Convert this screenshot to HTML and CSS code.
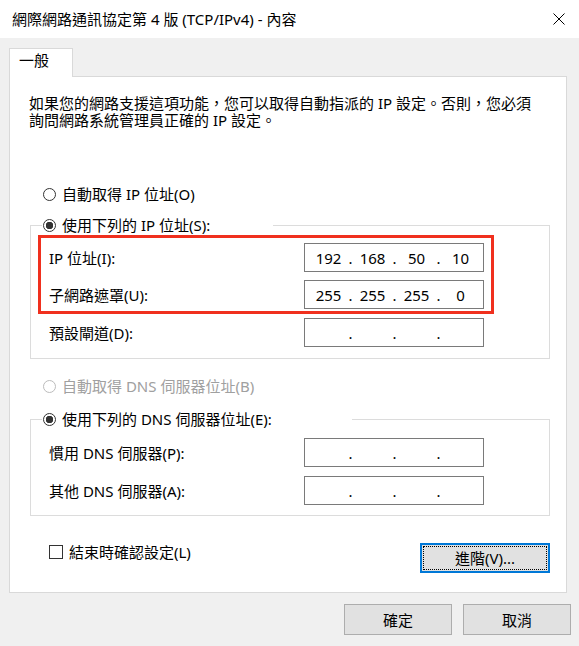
FILE: index.html
```html
<!DOCTYPE html>
<html lang="zh-Hant">

<head>
  <meta charset="UTF-8" />
  <title>網際網路通訊協定第 4 版 (TCP/IPv4) - 內容</title>
  <link rel="stylesheet" href="styles.css">
</head>

<body>

  <div class="titlebar">
    <span class="title">網際網路通訊協定第 4 版 (TCP/IPv4) - 內容</span>
    <svg class="close" width="12" height="12" viewBox="0 0 12 12">
      <path d="M0.5 0.5 L11.5 11.5 M11.5 0.5 L0.5 11.5" stroke="#000" stroke-width="1" fill="none" />
    </svg>
  </div>

  <div class="tabs">
    <div class="tab">一般</div>
  </div>

  <div class="panel">
    <p class="intro">如果您的網路支援這項功能，您可以取得自動指派的 IP 設定。否則，您必須<br>詢問網路系統管理員正確的 IP 設定。</p>

    <label class="option option-first"><input type="radio" name="ip" /> 自動取得 IP 位址(O)</label>

    <!-- 手動 IP -->
    <fieldset class="group group-ip">
      <legend class="legend legend-ip">
        <label class="option"><input type="radio" name="ip" checked /> 使用下列的 IP 位址(S):</label>
      </legend>
      <div class="highlight">
        <div class="row">
          <span>IP 位址(I):</span>
          <div class="ipbox"><span>192</span><span>.</span><span>168</span><span>.</span><span>50</span><span>.</span><span>10</span></div>
        </div>
        <div class="row">
          <span>子網路遮罩(U):</span>
          <div class="ipbox"><span>255</span><span>.</span><span>255</span><span>.</span><span>255</span><span>.</span><span>0</span></div>
        </div>
      </div>
      <div class="row row-plain row-gateway">
        <span>預設閘道(D):</span>
        <div class="ipbox"><span></span><span>.</span><span></span><span>.</span><span></span><span>.</span><span></span></div>
      </div>
    </fieldset>

    <label class="option option-dns disabled"><input type="radio" name="dns" disabled /> 自動取得 DNS 伺服器位址(B)</label>

    <!-- 手動 DNS -->
    <fieldset class="group group-dns">
      <legend class="legend legend-dns">
        <label class="option"><input type="radio" name="dns" checked /> 使用下列的 DNS 伺服器位址(E):</label>
      </legend>
      <div class="row row-plain">
        <span>慣用 DNS 伺服器(P):</span>
        <div class="ipbox"><span></span><span>.</span><span></span><span>.</span><span></span><span>.</span><span></span></div>
      </div>
      <div class="row row-plain row-second">
        <span>其他 DNS 伺服器(A):</span>
        <div class="ipbox"><span></span><span>.</span><span></span><span>.</span><span></span><span>.</span><span></span></div>
      </div>
    </fieldset>

    <div class="panel-bottom">
      <label class="option check"><input type="checkbox" /> 結束時確認設定(L)</label>
      <button class="btn btn-focus">進階(V)...</button>
    </div>
  </div>

  <div class="footer">
    <button class="btn btn-dialog">確定</button>
    <button class="btn btn-dialog">取消</button>
  </div>

</body>

</html>
```

FILE: styles.css
```css
* {
  margin: 0;
  padding: 0;
  box-sizing: border-box;
}

body {
  width: 579px;
  height: 646px;
  overflow: hidden;
  background-color: #f0f0f0;
  color: #000;
  font-family: "Noto Sans", "Noto Sans CJK TC", sans-serif;
  font-size: 15px;
  line-height: 18px;
}

/* barra de título */
.titlebar {
  height: 38px;
  background: #fff;
  display: flex;
  align-items: center;
  justify-content: space-between;
  padding: 0 14px 0 12px;
}

.close {
  display: block;
}

.tabs {
  padding: 10px 0 0 9px;
}

.tab {
  position: relative;
  z-index: 1;
  width: 64px;
  height: 29px;
  margin-bottom: -1px;
  padding: 2px 0 0 9px;
  background: #fff;
  border: 1px solid #d9d9d9;
  border-bottom: none;
}

.panel {
  height: 517px;
  margin: 0 12px 0 9px;
  padding: 18px 16px 0 20px;
  background: #fff;
  border: 1px solid #d9d9d9;
}

.intro {
  line-height: 17px;
  margin-left: -1px;
}

/* radios e checkbox */
.option {
  display: flex;
  align-items: center;
  gap: 6px;
  height: 18px;
  white-space: nowrap;
}

.option input {
  appearance: none;
  width: 13px;
  height: 13px;
  border: 1px solid #333;
  border-radius: 50%;
  background: #fff;
  margin: 0;
}

.option input:checked {
  background: radial-gradient(circle, #333 0 3.5px, #fff 4px);
}

.option.disabled {
  color: #a0a0a0;
}

.option.disabled input {
  border-color: #bcbcbc;
}

.check input {
  border-radius: 0;
  width: 14px;
  height: 14px;
}

.option-first {
  margin: 56px 0 0 13px;
}

.option-dns {
  margin: 18px 0 0 13px;
}

/* grupos */
.group {
  border: 1px solid #dcdcdc;
  min-width: 0;
}

.group-ip {
  margin-top: 13px;
  padding: 1px 0 11px;
}

.group-dns {
  margin-top: 15px;
  padding: 10px 0 10px;
}

.legend {
  margin-left: 11px;
  padding: 0 1px;
  background: #fff;
}

.legend-ip {
  width: 231px;
}

.legend-dns {
  width: 310px;
}

.highlight {
  margin: 0 55px 0 7px;
  padding: 5px 7px 2px 8px;
  border: 3px solid #f0301e;
  display: flex;
  flex-direction: column;
  gap: 8px;
}

.row {
  display: flex;
  align-items: center;
  justify-content: space-between;
}

.row-plain {
  padding: 0 65px 0 18px;
}

.row-gateway {
  margin-top: 4px;
}

.row-second {
  margin-top: 9px;
}

/* campo de IP */
.ipbox {
  width: 180px;
  height: 29px;
  border: 1px solid #7a7a7a;
  background: #fff;
  display: grid;
  grid-template-columns: 37px 7px 37px 7px 37px 7px 37px;
  align-items: center;
  padding-left: 5px;
  text-align: center;
}

/* botões */
.panel-bottom {
  display: flex;
  align-items: flex-start;
  justify-content: space-between;
  margin-top: 27px;
  padding-left: 19px;
}

.btn {
  font: inherit;
  color: #000;
  background: #e1e1e1;
  border: 1px solid #adadad;
}

.btn-focus {
  width: 130px;
  height: 30px;
  border-color: #0078d7;
  box-shadow: inset 0 0 0 1px #0078d7;
  outline: 1px dotted #000;
  outline-offset: -4px;
}

.footer {
  display: flex;
  justify-content: flex-end;
  gap: 11px;
  padding: 11px 8px 0 0;
}

.btn-dialog {
  width: 108px;
  height: 31px;
}
```
